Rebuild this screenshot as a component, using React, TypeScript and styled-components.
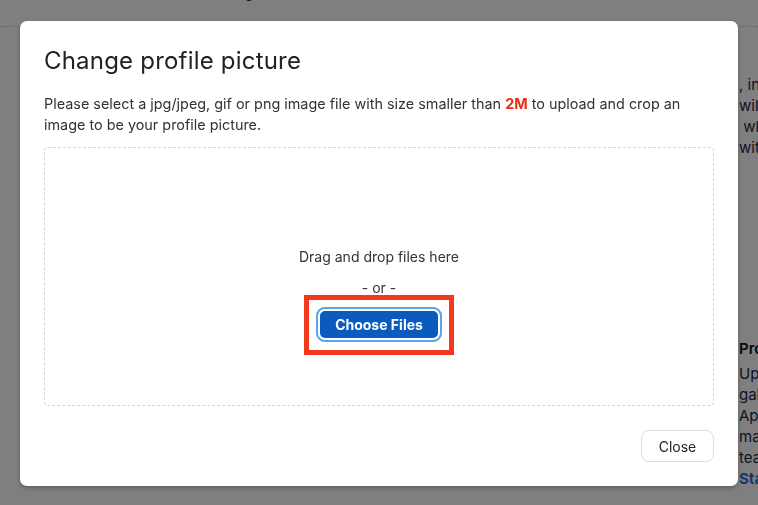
import React from 'react'
import styled, { createGlobalStyle } from 'styled-components'

const GlobalStyle = createGlobalStyle`
  html, body {
    margin: 0;
    padding: 0;
    width: 100%;
    height: 100%;
    overflow: hidden;
    background: #ffffff;
    font-family: Inter, 'Noto Sans', sans-serif;
  }
  * {
    box-sizing: border-box;
  }
`

export default function App() {
  return (
    <>
      <GlobalStyle />
      <Page>
        <PageHeader>
          <HeaderTitle>Settings</HeaderTitle>
        </PageHeader>
        <PageBody>
          <MainColumn />
          <SideColumn>
            <SideText>
              , including<br />
              will appear<br />
              &nbsp;when you<br />
              with others.
            </SideText>
            <SideHeading>Profile picture</SideHeading>
            <SideText>
              Upload a picture<br />
              gallery image.<br />
              Appears next to<br />
              many places so<br />
              team members.<br />
              <SideLink>Start</SideLink>
            </SideText>
          </SideColumn>
        </PageBody>
      </Page>
      <Backdrop>
        <Modal>
          <Title>Change profile picture</Title>
          <Description>
            Please select a jpg/jpeg, gif or png image file with size smaller than <Limit>2M</Limit> to upload and crop an image to be your profile picture.
          </Description>
          <DropZone>
            <DropText>Drag and drop files here</DropText>
            <OrText>- or -</OrText>
            <Highlighted>
              <ChooseButton>Choose Files</ChooseButton>
            </Highlighted>
          </DropZone>
          <Footer>
            <CloseButton>Close</CloseButton>
          </Footer>
        </Modal>
      </Backdrop>
    </>
  )
}

const Page = styled.div`
  width: 100%;
  height: 100vh;
  display: flex;
  flex-direction: column;
`

const PageHeader = styled.header`
  height: 27px;
  border-bottom: 1px dotted #c8c8c8;
  display: flex;
  justify-content: center;
  overflow: hidden;
`

const HeaderTitle = styled.span`
  font-size: 14px;
  line-height: 14px;
  color: #333;
  margin-top: -14px;
  margin-right: 290px;
`

const PageBody = styled.div`
  flex: 1;
  display: grid;
  grid-template-columns: 739px 240px;
`

const MainColumn = styled.div``

const SideColumn = styled.aside`
  padding-top: 47px;
  display: flex;
  flex-direction: column;
  white-space: nowrap;
`

const SideText = styled.p`
  margin: 0;
  font-size: 15px;
  line-height: 21px;
  color: #1b2a4a;
`

const SideHeading = styled.h3`
  margin: 180px 0 4px;
  font-size: 15px;
  line-height: 21px;
  font-weight: 600;
  color: #111;
`

const SideLink = styled.span`
  color: #2a6fd6;
  font-weight: 700;
`

const Backdrop = styled.div`
  position: fixed;
  inset: 0;
  background: rgba(0, 0, 0, 0.5);
  display: flex;
  justify-content: center;
  align-items: flex-start;
  padding-top: 21px;
`

const Modal = styled.div`
  width: 718px;
  background: #ffffff;
  border-radius: 7px;
  box-shadow: 0 2px 4px rgba(0, 0, 0, 0.25);
  padding: 25px 24px 24px 24px;
  display: flex;
  flex-direction: column;
`

const Title = styled.h2`
  margin: 0;
  font-size: 24px;
  line-height: 30px;
  font-weight: 400;
  color: #222;
  letter-spacing: 0.2px;
`

const Description = styled.p`
  margin: 17px 0 0;
  font-size: 14.4px;
  line-height: 21px;
  color: #333;
`

const Limit = styled.span`
  color: #ea2d12;
  font-weight: 700;
`

const DropZone = styled.div`
  margin-top: 12px;
  height: 259px;
  border: 1px dashed #d6d6d6;
  border-radius: 4px;
  display: flex;
  flex-direction: column;
  align-items: center;
  padding-top: 98px;
`

const DropText = styled.div`
  font-size: 14px;
  line-height: 21px;
  color: #333;
`

const OrText = styled.div`
  margin-top: 10px;
  font-size: 14px;
  line-height: 21px;
  color: #333;
`

const Highlighted = styled.div`
  position: relative;
  margin-top: 9px;
  &::after {
    content: '';
    position: absolute;
    left: -12px;
    right: -12px;
    top: -12px;
    bottom: -13px;
    border: 5px solid #f2391c;
    pointer-events: none;
  }
`

const ChooseButton = styled.button`
  width: 126px;
  height: 35px;
  border: none;
  border-radius: 9px;
  background: #0b5bbf;
  color: #ffffff;
  font-family: Inter, 'Noto Sans', sans-serif;
  font-size: 14px;
  font-weight: 700;
  box-shadow: inset 0 0 0 2px #5aa3ef, inset 0 0 0 4px #ffffff;
  cursor: pointer;
`

const Footer = styled.div`
  margin-top: 24px;
  display: flex;
  justify-content: flex-end;
`

const CloseButton = styled.button`
  width: 73px;
  height: 32px;
  border: 1px solid #dddddd;
  border-radius: 8px;
  background: #ffffff;
  color: #222;
  font-family: Inter, 'Noto Sans', sans-serif;
  font-size: 14px;
  cursor: pointer;
`
